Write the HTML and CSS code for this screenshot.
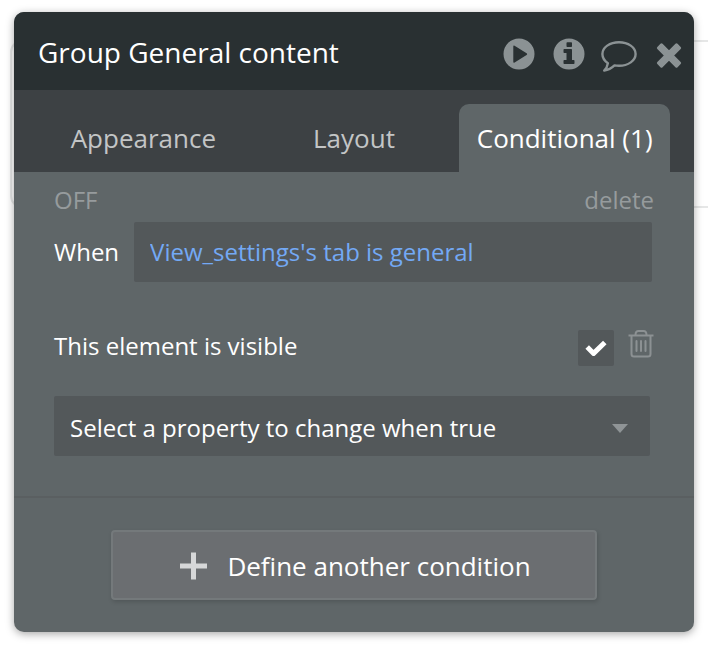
FILE: index.html
```html
<!DOCTYPE html>
<html lang="en">
<head>
<meta charset="utf-8">
<title>Group General content</title>
<link rel="stylesheet" href="styles.css">
</head>
<body>
<div class="canvas-group"></div>
<main class="panel">
  <header class="panel-header">
    <h1 class="title">Group General content</h1>
    <div class="actions">
      <button class="icon-button" type="button" aria-label="Preview">
        <svg viewBox="0 0 36 36" width="36" height="36"><path fill="currentColor" fill-rule="evenodd" d="M18 2.5a15.5 15.5 0 1 1 0 31a15.5 15.5 0 0 1 0-31zM12.300 10.500v15.200q0 1.400 1.300.7l12-7.400q1.100-.9 0-1.800l-12-7.400q-1.300-.7-1.300.7z"/></svg>
      </button>
      <button class="icon-button" type="button" aria-label="Information">
        <svg viewBox="0 0 36 36" width="36" height="36"><path fill="currentColor" fill-rule="evenodd" d="M18 2.500a15.500 15.500 0 1 1 0 31a15.500 15.500 0 0 1 0-31zM15.500 7v3.200q0 .8.8.8h3.900q.8 0 .8-.8V7q0-.8-.8-.8h-3.900q-.8 0-.8.8zM13.300 13q-.8 0-.8.8v2.400q0 .8.800.8h2.200v7h-2.200q-.8 0-.8.8v2.500q0 .8.800.8h9.400q.8 0 .8-.8v-2.500q0-.8-.8-.8H21V13.800q0-.8-.8-.8z"/></svg>
      </button>
      <button class="icon-button" type="button" aria-label="Comments">
        <svg viewBox="0 0 36 36" width="36" height="36"><path fill="none" stroke="currentColor" stroke-width="2.400" stroke-linejoin="round" d="M18 6.200c9.200 0 16.600 5.200 16.600 11.800S27.200 29.800 18 29.800c-1.600 0-3.100-.1-4.500-.4C10.500 32.300 7 34 3.200 34.500c2-1.900 3.300-4 3.700-7.300C3.500 24.900 1.400 21.700 1.400 18C1.400 11.400 8.800 6.200 18 6.200z"/></svg>
      </button>
      <button class="icon-button" type="button" aria-label="Close">
        <svg viewBox="0 0 36 36" width="36" height="36"><g fill="currentColor" transform="rotate(45 18 19.500)"><rect x="3.700" y="15.800" width="28.600" height="7.400" rx="1.500"/><rect x="14.300" y="5.200" width="7.400" height="28.600" rx="1.500"/></g></svg>
      </button>
    </div>
  </header>
  <nav class="tabs">
    <button class="tab" type="button">Appearance</button>
    <button class="tab" type="button">Layout</button>
    <button class="tab tab-active" type="button">Conditional (1)</button>
  </nav>
  <section class="condition">
    <div class="condition-bar">
      <button class="text-button" type="button">OFF</button>
      <button class="text-button" type="button">delete</button>
    </div>
    <div class="when-row">
      <label for="when">When</label>
      <input class="expression" id="when" type="text" value="View_settings's tab is general">
    </div>
    <div class="property-row">
      <label for="visible">This element is visible</label>
      <span class="check">
        <input class="check-input" id="visible" type="checkbox" checked>
        <svg class="check-mark" viewBox="0 0 36 36" width="36" height="36"><path fill="none" stroke="#fff" stroke-width="5" stroke-linejoin="round" d="M9.200 17l6.400 6.400L26.800 12.500"/></svg>
      </span>
      <button class="trash" type="button" aria-label="Remove property">
        <svg viewBox="0 0 26 28" width="26" height="28"><g fill="none" stroke="currentColor" stroke-width="2"><path d="M.5 5.500h25"/><path d="M7.500 5C7.500 2 8.500 1 10.500 1h5c2 0 3 1 3 4"/><path d="M3.500 6v18c0 1.700.8 2.500 2.500 2.500h14c1.700 0 2.500-.8 2.500-2.500V6"/><path stroke-linecap="round" d="M8.500 11v10M13 11v10M17.500 11v10"/></g></svg>
      </button>
    </div>
    <div class="select-wrap">
      <select class="property-select" aria-label="Property">
        <option>Select a property to change when true</option>
      </select>
      <svg class="caret" viewBox="0 0 16 9" width="16" height="9"><path fill="currentColor" d="M0 0h16L8 9z"/></svg>
    </div>
  </section>
  <footer class="panel-footer">
    <button class="define" type="button">
      <svg viewBox="0 0 28 28" width="28" height="28"><path fill="#d6d7d8" d="M12 .5h5v11h11v5H17v11h-5v-11H1v-5h11z"/></svg>
      Define another condition
    </button>
  </footer>
</main>
</body>
</html>
```
FILE: styles.css
```css
* {
  box-sizing: border-box;
}

body {
  margin: 0;
  padding: 12px 14px 18px;
  overflow: hidden;
  position: relative;
  background: #fff;
  color: #fff;
  font: 24px/32px "Open Sans", sans-serif;
}

button,
input,
select {
  margin: 0;
  padding: 0;
  border: 0;
  background: none;
  color: inherit;
  font: inherit;
}

svg {
  display: block;
}

.canvas-group {
  position: absolute;
  top: 40px;
  left: 10px;
  right: -20px;
  height: 168px;
  border: 2px solid #e6e7e7;
  border-radius: 12px;
}

.panel {
  position: relative;
  overflow: hidden;
  border-radius: 10px;
  background: #5f6668;
  box-shadow: 0 2px 8px rgba(0, 0, 0, 0.35);
}

.panel-header {
  display: flex;
  align-items: flex-end;
  justify-content: space-between;
  padding: 20px 7px 18px 24px;
  background: #293032;
}

.title {
  margin: 0;
  font-size: 28px;
  font-weight: 400;
  line-height: 40px;
}

.actions {
  display: flex;
  gap: 14px;
}

.icon-button {
  color: #8b9294;
}

.tabs {
  display: grid;
  grid-template-columns: repeat(3, 1fr);
  padding: 14px 24px 0;
  background: #3d4144;
}

.tab {
  height: 68px;
  border-radius: 10px 10px 0 0;
  color: #c3c5c6;
  font-size: 26px;
}

.tab-active {
  background: #5f6668;
  color: #fff;
}

.condition {
  padding: 12px 40px 40px;
  border-bottom: 2px solid #5a5f61;
}

.condition-bar {
  display: flex;
  justify-content: space-between;
  margin-bottom: 6px;
}

.text-button {
  color: #969b9d;
}

.when-row {
  display: flex;
  align-items: center;
  gap: 15px;
  margin-right: 2px;
}

.expression {
  flex: 1;
  min-width: 0;
  height: 60px;
  padding: 0 16px 2px;
  border-radius: 2px;
  background: #53585a;
  color: #73a9f5;
}

.property-row {
  display: flex;
  align-items: flex-start;
  margin: 48px 0 30px;
}

.property-row label {
  flex: 1;
}

.check {
  position: relative;
  width: 36px;
  height: 36px;
  margin-right: 14px;
}

.check-input {
  display: block;
  width: 36px;
  height: 36px;
  appearance: none;
  border-radius: 2px;
  background: #53585a;
}

.check-mark {
  position: absolute;
  inset: 0;
  pointer-events: none;
}

.trash {
  color: #8c9193;
}

.select-wrap {
  position: relative;
  margin-right: 4px;
}

.property-select {
  display: block;
  width: 100%;
  height: 60px;
  padding: 4px 48px 0 16px;
  appearance: none;
  border-radius: 2px;
  background: #53585a;
}

.caret {
  position: absolute;
  top: 28px;
  right: 22px;
  color: #8f9496;
  pointer-events: none;
}

.panel-footer {
  padding: 32px 97px;
}

.define {
  display: flex;
  align-items: center;
  justify-content: center;
  gap: 20px;
  width: 100%;
  height: 70px;
  padding: 2px 0 0 2px;
  border: 2px solid #74797b;
  border-radius: 4px;
  background: #6b6e71;
  box-shadow: 1px 2px 4px rgba(0, 0, 0, 0.15);
  font-size: 26px;
}
```
